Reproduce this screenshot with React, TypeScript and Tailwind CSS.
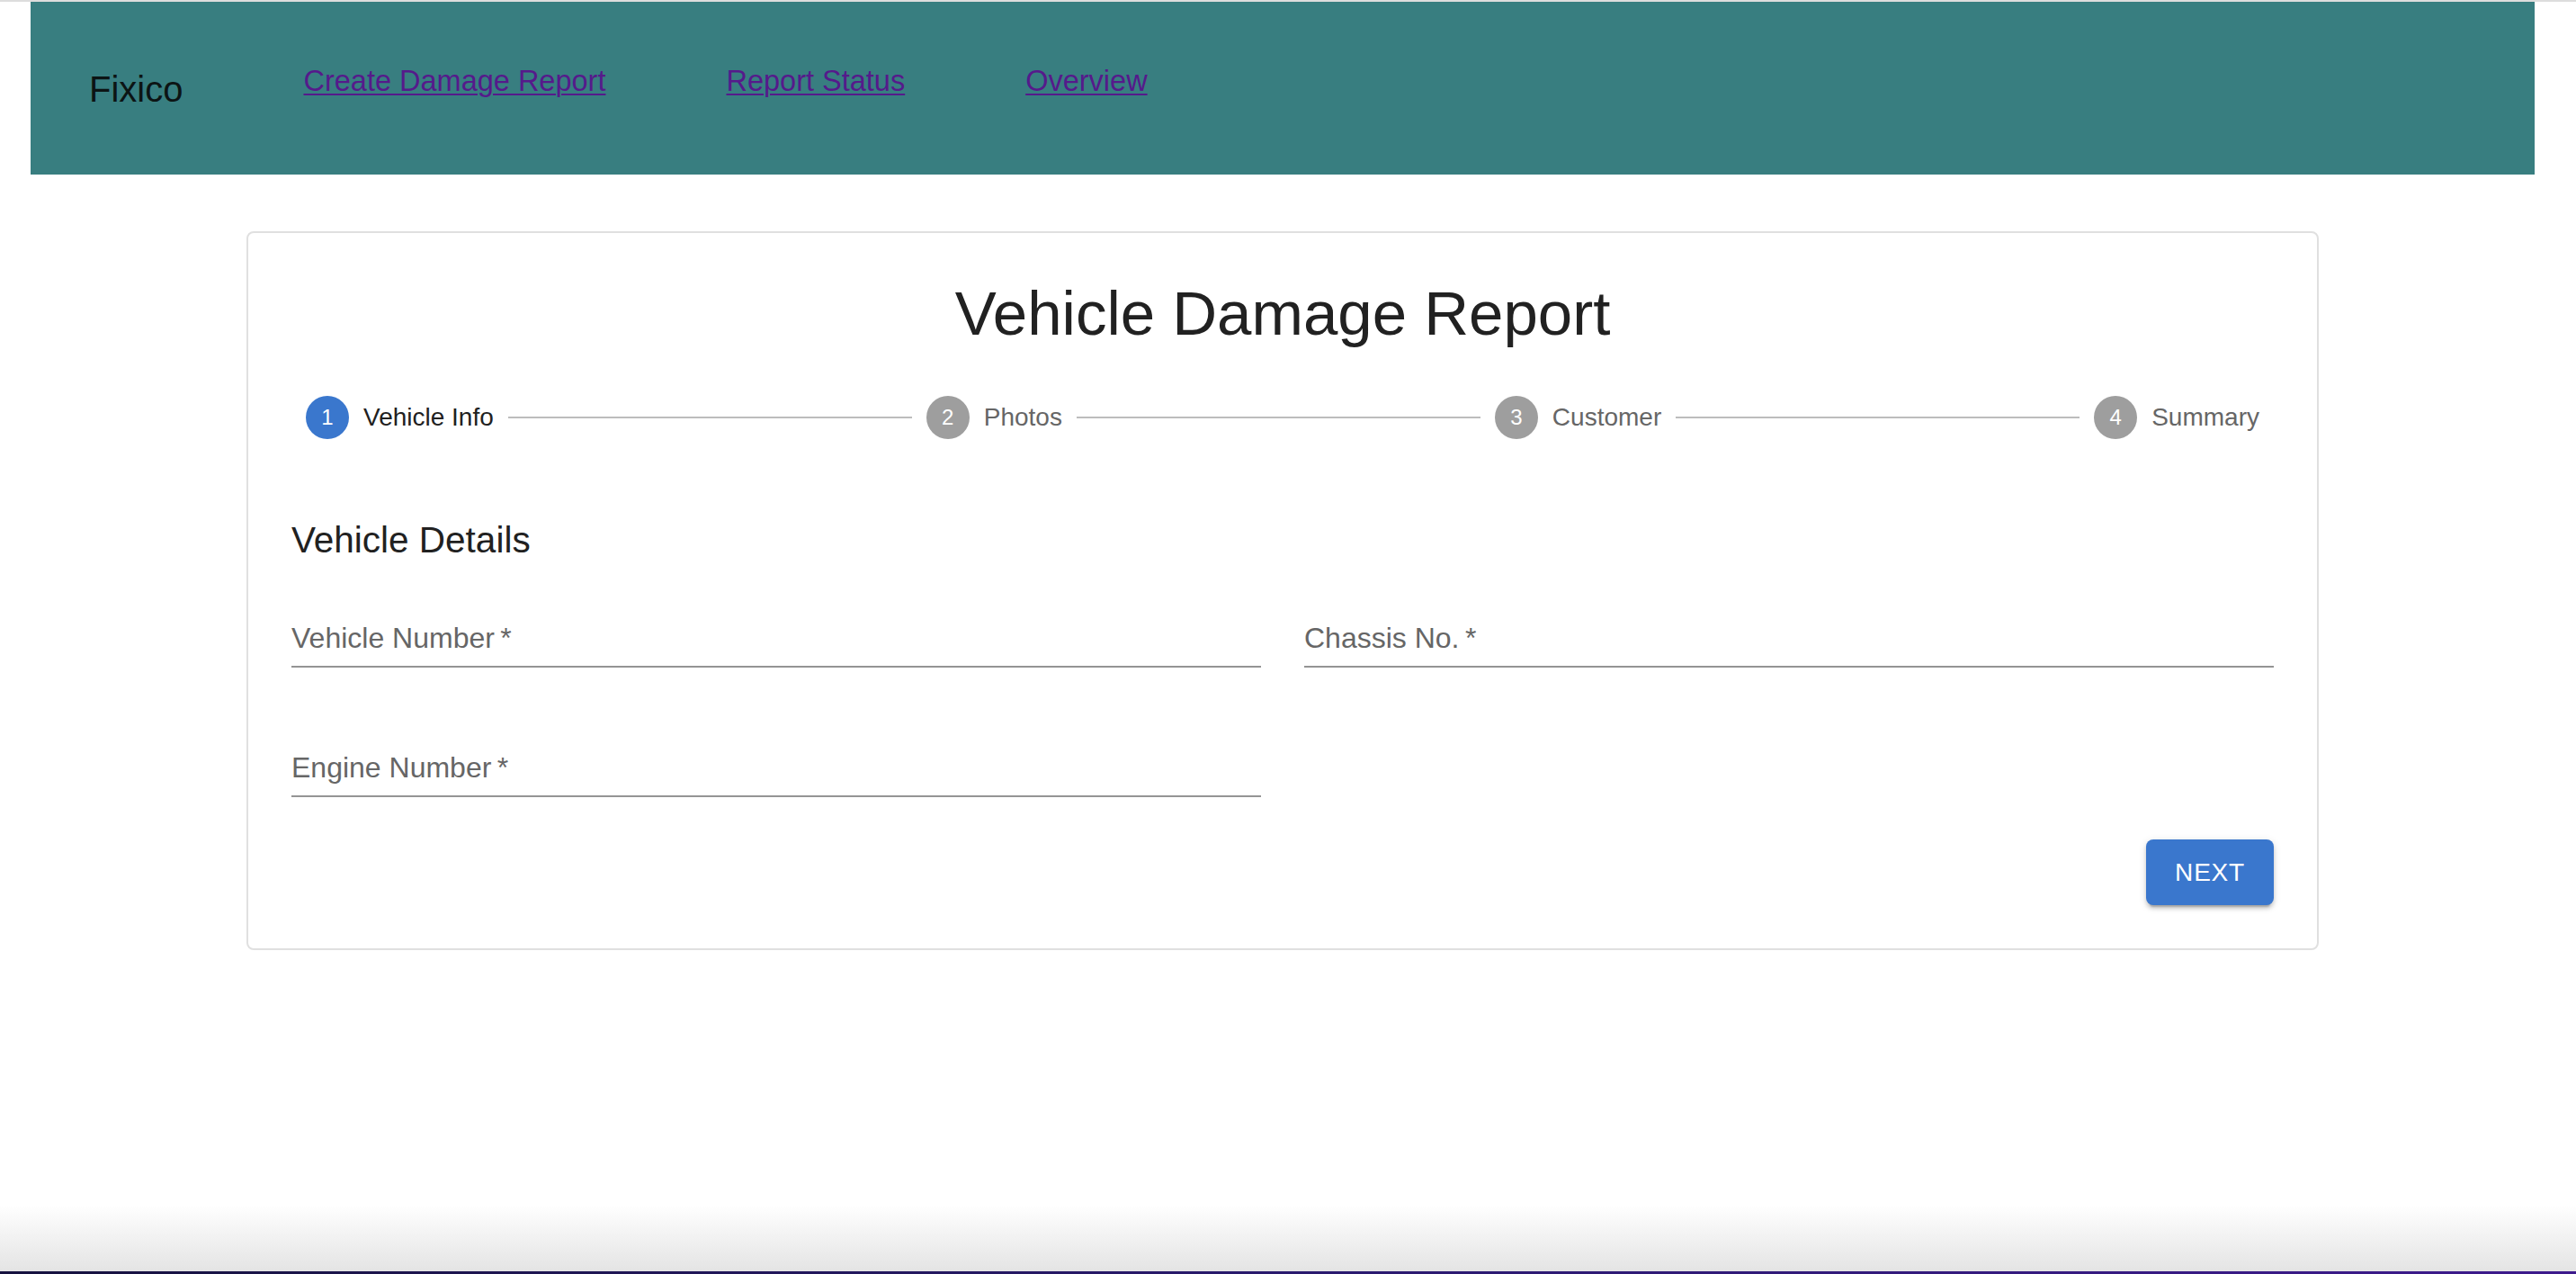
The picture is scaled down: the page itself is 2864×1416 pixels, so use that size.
const NAV_LINKS = ["Create Damage Report", "Report Status", "Overview"];

const STEPS = ["Vehicle Info", "Photos", "Customer", "Summary"];

const ACTIVE_STEP = 0;

function Header() {
  return (
    <header className="flex h-[192px] w-full items-start gap-[134px] bg-[#387e80] pl-[65px]">
      <div className="mt-[74px] text-[40px] leading-[46px] text-[#0c1414]">Fixico</div>
      {NAV_LINKS.map((link) => (
        <a
          key={link}
          href="#"
          className="mt-[70px] text-[32.5px] leading-[37px] text-[#551a8b] underline decoration-[2px] underline-offset-[3px]"
        >
          {link}
        </a>
      ))}
    </header>
  );
}

function Step({ label, index }: { label: string; index: number }) {
  const isActive = index === ACTIVE_STEP;
  return (
    <div className="flex flex-none items-center px-[16px]">
      <div
        className={
          isActive
            ? "flex h-[48px] w-[48px] items-center justify-center rounded-full bg-[#3a77cd] text-[24px] text-white"
            : "flex h-[48px] w-[48px] items-center justify-center rounded-full bg-[#9e9e9e] text-[24px] text-white"
        }
      >
        {index + 1}
      </div>
      <span
        className={
          isActive
            ? "pl-[16px] text-[28px] leading-[40px] text-[#212121]"
            : "pl-[16px] text-[28px] leading-[40px] text-[#666666]"
        }
      >
        {label}
      </span>
    </div>
  );
}

function Stepper() {
  return (
    <div className="mt-[49px] flex h-[48px] items-center">
      {STEPS.map((step, index) => (
        <div key={step} className="contents">
          {index > 0 && <div className="h-[2px] flex-1 bg-[#bdbdbd]" />}
          <Step label={step} index={index} />
        </div>
      ))}
    </div>
  );
}

function Field({ label }: { label: string }) {
  return (
    <div className="flex h-[96px] flex-col">
      <div className="pt-[40px] text-[32px] leading-[46px] text-[#666666]">
        {label}
        {"\u2009*"}
      </div>
      <div className="mt-[8px] h-[2px] w-full bg-[#949494]" />
    </div>
  );
}

function VehicleForm() {
  return (
    <div className="rounded-[8px] border-2 border-[#e0e0e0] bg-white p-[48px]">
      <h1 className="text-center text-[69px] leading-[84px] text-[#212121]">Vehicle Damage Report</h1>

      <Stepper />

      <h2 className="mt-[80px] mb-[14px] text-[40.5px] leading-[64px] text-[#212121]">Vehicle Details</h2>

      <div className="grid grid-cols-2 gap-x-[48px] gap-y-[48px]">
        <Field label="Vehicle Number" />
        <Field label="Chassis No." />
        <Field label="Engine Number" />
      </div>

      <div className="mt-[47px] flex justify-end">
        <button className="h-[73px] rounded-[8px] bg-[#3a77cd] px-[32px] text-[28px] tracking-[0.8px] text-white uppercase shadow-[0_6px_2px_-4px_rgba(0,0,0,0.2),0_4px_4px_0_rgba(0,0,0,0.14),0_2px_10px_0_rgba(0,0,0,0.12)]">
          Next
        </button>
      </div>
    </div>
  );
}

function App() {
  return (
    <div className="flex min-h-screen flex-col bg-white font-['Liberation_Sans',Arial,sans-serif]">
      <div className="h-[2px] w-full bg-[#dddddd]" />
      <div className="pl-[34px] pr-[46px]">
        <Header />
        <main className="mx-auto mt-[63px] w-[2304px]">
          <VehicleForm />
        </main>
      </div>
      <div className="flex-1" />
      <div className="h-[74px] w-full bg-gradient-to-b from-white to-[#e4e4e4]" />
      <div className="h-[3px] w-full bg-gradient-to-r from-[#16123f] via-[#2a1a6e] to-[#3d1a8c]" />
    </div>
  );
}

export default App;
